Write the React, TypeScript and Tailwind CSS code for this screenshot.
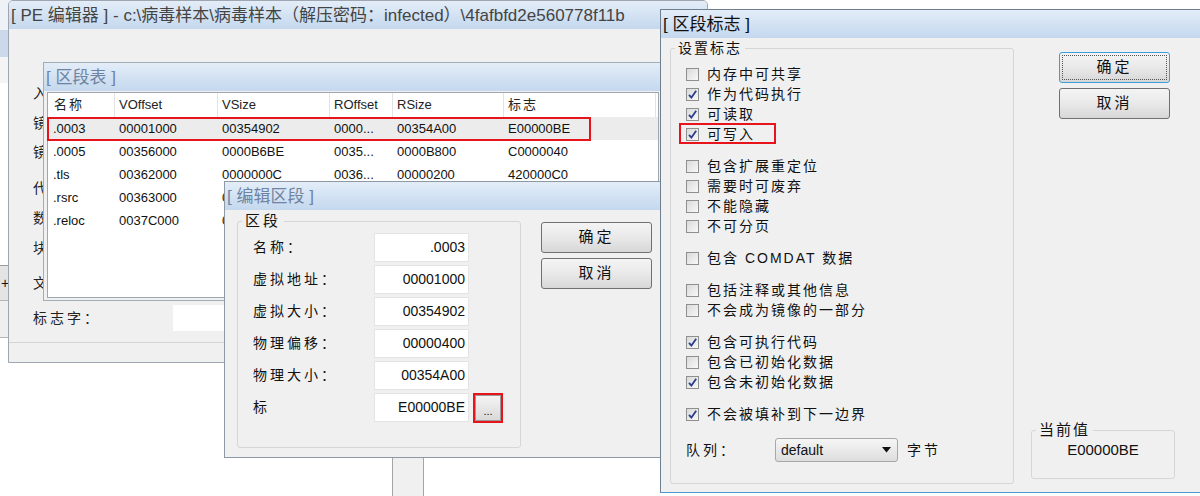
import type { ReactNode } from "react";

const FONT = "font-['Liberation_Sans','Noto_Sans_CJK_SC',sans-serif]";

type WinProps = {
  title: string;
  tone: string;
  className: string;
  children: ReactNode;
};

// a window frame with the light blue title bar
function Win({ title, tone, className, children }: WinProps) {
  return (
    <div className={`absolute flex flex-col overflow-hidden border bg-[#f0f0f0] ${className}`}>
      <div
        className={`flex h-[28px] shrink-0 items-center whitespace-nowrap bg-linear-to-b from-[#e3edf8] to-[#c4d8ee] pl-[2px] text-[17px] leading-none ${tone}`}
      >
        {title}
      </div>
      {children}
    </div>
  );
}

function Btn({ children, focused = false }: { children: ReactNode; focused?: boolean }) {
  return (
    <div
      className={`flex h-[31px] w-[111px] rounded-[3px] border bg-linear-to-b from-[#f4f4f4] via-[#e9e9e9] to-[#d7d7d7] text-[15px] tracking-[3px] ${
        focused ? "border-[#3c9fd8]" : "border-[#707070]"
      }`}
    >
      {focused ? (
        <div className="m-[2px] flex flex-1 items-center justify-center border border-dotted border-[#555]">{children}</div>
      ) : (
        <div className="flex flex-1 items-center justify-center">{children}</div>
      )}
    </div>
  );
}

function Check({ on }: { on: boolean }) {
  return (
    <span className="flex h-[13px] w-[13px] shrink-0 items-center justify-center border border-[#8e8f8f] bg-linear-to-br from-[#dadada] to-[#f8f8f8]">
      {on && (
        <svg width="11" height="11" viewBox="0 0 11 11">
          <path d="M2 5.8 L4.4 8.6 L9.2 1.8" fill="none" stroke="#2a3d8f" strokeWidth="1.8" />
        </svg>
      )}
    </span>
  );
}

const sections = [
  [".0003", "00001000", "00354902", "0000...", "00354A00", "E00000BE"],
  [".0005", "00356000", "0000B6BE", "0035...", "0000B800", "C0000040"],
  [".tls", "00362000", "0000000C", "0036...", "00000200", "420000C0"],
  [".rsrc", "00363000", "00018A20", "0036...", "00018C00", "40000040"],
  [".reloc", "0037C000", "0000E5A4", "0037...", "0000E600", "42000040"],
];

const fields = [
  ["名称：", ".0003"],
  ["虚拟地址：", "00001000"],
  ["虚拟大小：", "00354902"],
  ["物理偏移：", "00000400"],
  ["物理大小：", "00354A00"],
];

const flagGroups: [string, boolean][][] = [
  [["内存中可共享", false], ["作为代码执行", true], ["可读取", true], ["可写入", true]],
  [["包含扩展重定位", false], ["需要时可废弃", false], ["不能隐藏", false], ["不可分页", false]],
  [["包含 COMDAT 数据", false]],
  [["包括注释或其他信息", false], ["不会成为镜像的一部分", false]],
  [["包含可执行代码", true], ["包含已初始化数据", false], ["包含未初始化数据", true]],
  [["不会被填补到下一边界", true]],
];

export default function App() {
  return (
    <div className={`relative h-[496px] w-[1200px] overflow-hidden bg-white text-[#111] ${FONT}`}>
      {/* window sliver behind everything */}
      <div className="absolute left-0 top-0 flex w-[12px] flex-col">
        <div className="h-[30px] bg-[#eef2f7]" />
        <div className="h-[27px] bg-[#cbd9ea]" />
        <div className="h-[26px] bg-[#f4f4f4]" />
        <div className="h-[182px] bg-white" />
        <div className="flex h-[35px] items-center border-t border-[#9a9a9a] bg-[#e4e4e4] pl-[1px] text-[14px]">+</div>
        <div className="h-[38px] border-y border-[#b5b5b5] bg-[#efefef]" />
      </div>

      {/* PE editor */}
      <Win
        className="left-[8px] top-0 h-[363px] w-[700px] rounded-t-[5px] border-[#9ea7b1]"
        tone="text-[#444]"
        title={"[ PE 编辑器 ] - c:\\病毒样本\\病毒样本（解压密码：infected）\\4fafbfd2e560778f11b"}
      >
        <div className="flex flex-1 flex-col">
          <div className="flex flex-col pl-[24px] pt-[54px] text-[14px] leading-[20px] tracking-[3px] text-[#222]">
            <div className="w-[11px] overflow-hidden whitespace-nowrap">入口点：</div>
            <div className="mt-[10px] w-[11px] overflow-hidden whitespace-nowrap">镜像基址：</div>
            <div className="mt-[9px] w-[11px] overflow-hidden whitespace-nowrap">镜像大小：</div>
            <div className="mt-[16px] w-[11px] overflow-hidden whitespace-nowrap">代码基址：</div>
            <div className="mt-[10px] w-[11px] overflow-hidden whitespace-nowrap">数据基址：</div>
            <div className="mt-[10px] w-[11px] overflow-hidden whitespace-nowrap">块对齐：</div>
            <div className="mt-[15px] w-[11px] overflow-hidden whitespace-nowrap">文件块对齐：</div>
            <div className="mt-[12px] flex items-center">
              <span className="w-[140px]">标志字：</span>
              <div className="h-[26px] w-[200px] bg-white" />
            </div>
          </div>
          <div className="mt-auto h-[20px] border-t border-[#d4d4d4]" />
        </div>
      </Win>

      {/* section table */}
      <Win
        className="left-[43px] top-[62px] h-[239px] w-[620px] border-[#a3adb8]"
        tone="text-[#6f84a2]"
        title="[ 区段表 ]"
      >
        <div className="flex flex-1 px-[3px] pb-[2px] pt-[1px]">
          <div className="flex flex-1 flex-col border border-[#a0a6ae] bg-white text-[13px]">
            <div className="flex h-[24px] shrink-0 items-center tracking-[2px] text-[#222]">
              <div className="flex h-full w-[67px] items-center border-r border-[#e3e3e3] pl-[6px]">名称</div>
              <div className="flex h-full w-[103px] items-center border-r border-[#e3e3e3] pl-[4px] tracking-normal">VOffset</div>
              <div className="flex h-full w-[112px] items-center border-r border-[#e3e3e3] pl-[4px] tracking-normal">VSize</div>
              <div className="flex h-full w-[63px] items-center border-r border-[#e3e3e3] pl-[4px] tracking-normal">ROffset</div>
              <div className="flex h-full w-[111px] items-center border-r border-[#e3e3e3] pl-[4px] tracking-normal">RSize</div>
              <div className="flex h-full w-[152px] items-center border-r border-[#e3e3e3] pl-[4px]">标志</div>
            </div>
            {sections.map((r, i) => (
              <div key={r[0]} className={`relative flex h-[23px] shrink-0 items-center ${i === 0 ? "bg-[#ececec]" : ""}`}>
                <div className="w-[67px] pl-[5px]">{r[0]}</div>
                <div className="w-[103px] pl-[4px]">{r[1]}</div>
                <div className="w-[112px] pl-[4px]">{r[2]}</div>
                <div className="w-[63px] pl-[4px]">{r[3]}</div>
                <div className="w-[111px] pl-[4px]">{r[4]}</div>
                <div className="pl-[4px]">{r[5]}</div>
                {i === 0 && <div className="absolute -left-px top-0 h-[24px] w-[544px] border-2 border-[#e8141c]" />}
              </div>
            ))}
          </div>
        </div>
      </Win>

      {/* strip below the edit dialog */}
      <div className="absolute left-[392px] top-[440px] h-[60px] w-[32px] border-x border-[#a5a5a5] bg-[#f0f0f0]" />

      {/* edit section dialog */}
      <Win
        className="left-[224px] top-[181px] h-[277px] w-[440px] border-[#8e99a6]"
        tone="text-[#6f84a2]"
        title="[ 编辑区段 ]"
      >
        <div className="flex flex-1 items-start pl-[12px] pt-[2px]">
          <fieldset className="h-[236px] w-[284px] rounded-[3px] border border-[#d6d6d6] px-[4px]">
            <legend className="px-[3px] text-[15px] leading-[18px] tracking-[3px]">区段</legend>
            <div className="mt-[3px] flex flex-col gap-[3px] pl-[11px] text-[14px]">
              {fields.map(([label, value]) => (
                <div key={label} className="flex h-[29px] items-center">
                  <span className="w-[121px] tracking-[3px]">{label}</span>
                  <div className="h-[29px] w-[95px] border border-[#e4e4e4] bg-white pr-[3px] text-right leading-[27px]">{value}</div>
                </div>
              ))}
              <div className="flex h-[29px] items-center">
                <span className="w-[121px] tracking-[3px]">标</span>
                <div className="h-[29px] w-[95px] border border-[#e4e4e4] bg-white pr-[3px] text-right leading-[27px]">E00000BE</div>
                <div className="ml-[4px] flex h-[30px] w-[30px] border-2 border-[#e8141c]">
                  <div className="flex flex-1 items-end justify-center border border-[#9a9a9a] bg-linear-to-b from-[#f4f4f4] to-[#d9d9d9] pb-[3px] text-[11px] leading-none">
                    ...
                  </div>
                </div>
              </div>
            </div>
          </fieldset>
          <div className="ml-[20px] mt-[10px] flex flex-col gap-[5px]">
            <Btn>确定</Btn>
            <Btn>取消</Btn>
          </div>
        </div>
      </Win>

      {/* section flags dialog */}
      <Win
        className="left-[660px] top-[9px] h-[484px] w-[545px] border-[#6f7f90] border-b-[#4f9ad6]"
        tone="text-[#111]"
        title="[ 区段标志 ]"
      >
        <div className="flex flex-1 pb-[8px] pl-[9px] pt-[1px]">
          <fieldset className="w-[344px] rounded-[3px] border border-[#d6d6d6] px-[4px]">
            <legend className="px-[3px] text-[14px] leading-[18px] tracking-[2px]">设置标志</legend>
            <div className="flex flex-col gap-3 pl-[11px] pt-[7px] text-[14px]">
              {flagGroups.map((group, gi) => (
                <div key={gi} className="flex flex-col">
                  {group.map(([label, on]) => (
                    <div key={label} className="relative flex h-[20px] items-center">
                      <Check on={on} />
                      <span className="ml-[8px] tracking-[2px]">{label}</span>
                      {label === "可写入" && (
                        <div className="absolute -left-[7px] -top-px h-[21px] w-[97px] border-2 border-[#e8141c]" />
                      )}
                    </div>
                  ))}
                </div>
              ))}
              <div className="mt-[2px] flex h-[24px] items-center">
                <span className="w-[89px] tracking-[3px]">队列：</span>
                <div className="flex h-[24px] w-[123px] items-center justify-between rounded-[3px] border border-[#a8a8a8] bg-linear-to-b from-[#f6f6f6] to-[#dddddd] pl-[5px] pr-[6px]">
                  <span>default</span>
                  <svg width="9" height="6" viewBox="0 0 9 6">
                    <path d="M0 0 H9 L4.5 5.5 Z" fill="#111" />
                  </svg>
                </div>
                <span className="ml-[9px] tracking-[3px]">字节</span>
              </div>
            </div>
          </fieldset>
          <div className="ml-[17px] flex w-[144px] flex-col pb-[5px]">
            <div className="ml-[28px] mt-[13px] flex flex-col gap-[5px]">
              <Btn focused>确定</Btn>
              <Btn>取消</Btn>
            </div>
            <fieldset className="mt-auto flex h-[58px] flex-col rounded-[3px] border border-[#d6d6d6] px-[4px]">
              <legend className="px-[3px] text-[15px] leading-[18px] tracking-[2px]">当前值</legend>
              <div className="flex flex-1 items-center justify-center text-[15px]">E00000BE</div>
            </fieldset>
          </div>
        </div>
      </Win>
    </div>
  );
}
